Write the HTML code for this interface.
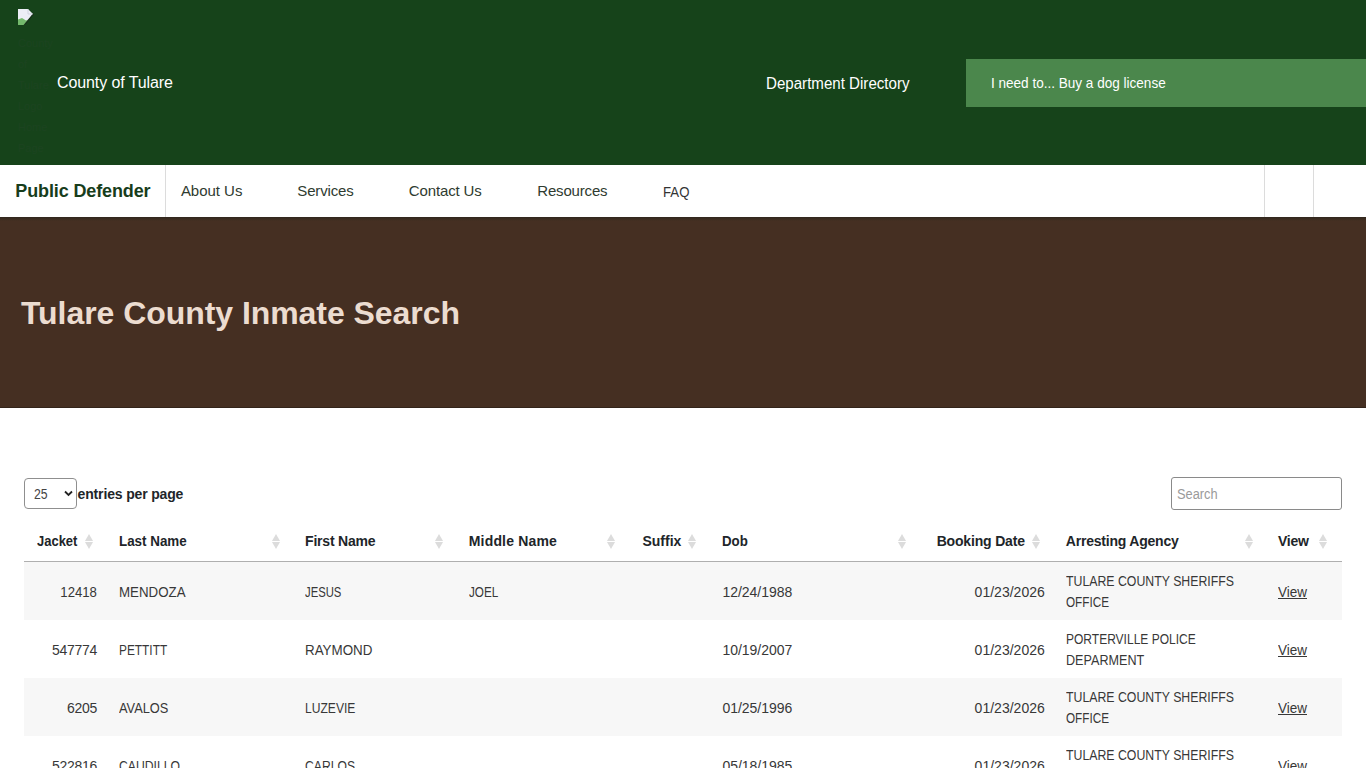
<!DOCTYPE html>
<html><head><meta charset="utf-8"><style>
html,body{margin:0;padding:0;width:1366px;height:768px;overflow:hidden;background:#fff;position:relative;font-family:"Liberation Sans",sans-serif;}
.t{position:absolute;white-space:nowrap;line-height:normal;}
#hdr{position:absolute;left:0;top:0;width:1366px;height:165px;background:#16431a;}
#btn{position:absolute;left:966px;top:59px;width:400px;height:48px;background:#4b874c;}
#nav{position:absolute;left:0;top:165px;width:1366px;height:52px;background:#fff;}
.vd{position:absolute;top:165px;width:1px;height:52px;background:#dcdcdc;}
#navb{position:absolute;left:0;top:217px;width:1366px;height:4px;background:linear-gradient(#30271d,#3b2c20 50%,#452f22);}
#hero{position:absolute;left:0;top:221px;width:1366px;height:187px;background:#452f22;}
#herob{position:absolute;left:0;top:407px;width:1366px;height:1px;background:#33241a;}
#sel{position:absolute;left:24px;top:478px;width:51px;height:29px;border:1px solid #8f8f8f;border-radius:4px;background:#fff;}
#srch{position:absolute;left:1171px;top:477px;width:169px;height:31px;border:1px solid #8a8a8a;border-radius:3px;background:#fff;}
#thl{position:absolute;left:24px;top:561px;width:1318px;height:1px;background:#afafaf;}
.stripe{position:absolute;left:24px;width:1318px;height:58px;background:#f7f7f7;}
.si{position:absolute;top:533px;width:9px;height:16px;}
.si .up{position:absolute;left:0.5px;top:0.5px;width:0;height:0;border-left:4px solid transparent;border-right:4px solid transparent;border-bottom:7px solid #dcdcdc;}
.si .dn{position:absolute;left:0.5px;top:9px;width:0;height:0;border-left:4px solid transparent;border-right:4px solid transparent;border-top:7px solid #dcdcdc;}
#bimg{position:absolute;left:18px;top:9px;width:16px;height:16px;}
</style></head><body>
<div id="hdr"></div>
<svg id="bimg" viewBox="0 0 16 16"><path d="M0 0H10L15 5L6.5 16H0Z" fill="#eceef6"/><path d="M0 10.5L4 9L8 11.5L10.5 10.5L6.5 16H0Z" fill="#74b96c"/><path d="M6 16.5L15.5 4.8" stroke="#17301a" stroke-width="1.3"/><path d="M10 0L10 5H15" fill="none" stroke="#c8ccd8" stroke-width="0.7"/></svg>
<div id="alt" style="position:absolute;left:18px;top:33px;width:30px;font:11px/21px 'Liberation Sans',sans-serif;color:#1c4320;">County of Tulare Logo Home Page</div>
<div id="btn"></div>
<div id="nav"></div>
<div class="vd" style="left:165px"></div>
<div class="vd" style="left:1264px"></div>
<div class="vd" style="left:1313px"></div>
<div id="navb"></div>
<div id="hero"></div>
<div id="herob"></div>
<div id="sel"></div>
<svg style="position:absolute;left:63.5px;top:489.5px" width="9" height="7" viewBox="0 0 9 7"><path d="M1 1.5L4.5 5L8 1.5" fill="none" stroke="#222" stroke-width="1.8"/></svg>
<div id="srch"></div>
<div class="stripe" style="top:562px"></div><div class="stripe" style="top:678px"></div>
<div id="thl"></div>
<div class="si" style="left:84.8px"><span class="up"></span><span class="dn"></span></div>
<div class="si" style="left:271.5px"><span class="up"></span><span class="dn"></span></div>
<div class="si" style="left:434.8px"><span class="up"></span><span class="dn"></span></div>
<div class="si" style="left:606.3px"><span class="up"></span><span class="dn"></span></div>
<div class="si" style="left:687.2px"><span class="up"></span><span class="dn"></span></div>
<div class="si" style="left:897.2px"><span class="up"></span><span class="dn"></span></div>
<div class="si" style="left:1031.6px"><span class="up"></span><span class="dn"></span></div>
<div class="si" style="left:1244.0px"><span class="up"></span><span class="dn"></span></div>
<div class="si" style="left:1318.8px"><span class="up"></span><span class="dn"></span></div>
<div class="t" style="font:16px 'Liberation Sans', sans-serif;color:#ffffff;top:73.52px;letter-spacing:-0.094px;left:57.00px;">County of Tulare</div>
<div class="t" style="font:16px 'Liberation Sans', sans-serif;color:#ffffff;top:75.12px;letter-spacing:0.000px;transform:scaleX(0.9438);transform-origin:left center;left:766.40px;">Department Directory</div>
<div class="t" style="font:14.5px 'Liberation Sans', sans-serif;color:#ffffff;top:75.48px;letter-spacing:0.000px;transform:scaleX(0.9341);transform-origin:left center;left:990.80px;">I need to... Buy a dog license</div>
<div class="t" style="font:bold 18px 'Liberation Sans', sans-serif;color:#173d1b;top:180.71px;letter-spacing:-0.124px;left:15.30px;">Public Defender</div>
<div class="t" style="font:15px 'Liberation Sans', sans-serif;color:#2f3b30;top:182.43px;letter-spacing:-0.029px;left:180.90px;">About Us</div>
<div class="t" style="font:15px 'Liberation Sans', sans-serif;color:#2f3b30;top:182.43px;letter-spacing:-0.162px;left:297.30px;">Services</div>
<div class="t" style="font:15px 'Liberation Sans', sans-serif;color:#2f3b30;top:182.43px;letter-spacing:-0.134px;left:408.80px;">Contact Us</div>
<div class="t" style="font:15px 'Liberation Sans', sans-serif;color:#2f3b30;top:182.43px;letter-spacing:-0.175px;left:537.30px;">Resources</div>
<div class="t" style="font:15px 'Liberation Sans', sans-serif;color:#333333;top:183.43px;letter-spacing:0.000px;transform:scaleX(0.8795);transform-origin:left center;left:663.10px;">FAQ</div>
<div class="t" style="font:bold 32px 'Liberation Sans', sans-serif;color:#ecdcd0;top:294.74px;letter-spacing:-0.054px;left:21.00px;">Tulare County Inmate Search</div>
<div class="t" style="font:14px 'Liberation Sans', sans-serif;color:#444444;top:486.03px;letter-spacing:0.000px;transform:scaleX(0.8730);transform-origin:left center;left:33.70px;">25</div>
<div class="t" style="font:bold 14px 'Liberation Sans', sans-serif;color:#212529;top:486.03px;letter-spacing:-0.157px;left:77.60px;">entries per page</div>
<div class="t" style="font:14px 'Liberation Sans', sans-serif;color:#9a9a9a;top:486.33px;letter-spacing:0.000px;transform:scaleX(0.9153);transform-origin:left center;left:1177.20px;">Search</div>
<div class="t" style="font:bold 14px 'Liberation Sans', sans-serif;color:#212529;top:533.43px;letter-spacing:0.000px;transform:scaleX(0.9267);transform-origin:left center;left:37.10px;">Jacket</div>
<div class="t" style="font:bold 14px 'Liberation Sans', sans-serif;color:#212529;top:533.43px;letter-spacing:0.000px;transform:scaleX(0.9560);transform-origin:left center;left:118.80px;">Last Name</div>
<div class="t" style="font:bold 14px 'Liberation Sans', sans-serif;color:#212529;top:533.43px;letter-spacing:-0.207px;left:305.10px;">First Name</div>
<div class="t" style="font:bold 14px 'Liberation Sans', sans-serif;color:#212529;top:533.43px;letter-spacing:0.164px;left:468.80px;">Middle Name</div>
<div class="t" style="font:bold 14px 'Liberation Sans', sans-serif;color:#212529;top:533.43px;letter-spacing:-0.018px;left:642.50px;">Suffix</div>
<div class="t" style="font:bold 14px 'Liberation Sans', sans-serif;color:#212529;top:533.43px;letter-spacing:0.000px;transform:scaleX(0.9479);transform-origin:left center;left:722.40px;">Dob</div>
<div class="t" style="font:bold 14px 'Liberation Sans', sans-serif;color:#212529;top:533.43px;letter-spacing:-0.176px;left:936.70px;">Booking Date</div>
<div class="t" style="font:bold 14px 'Liberation Sans', sans-serif;color:#212529;top:533.43px;letter-spacing:-0.212px;left:1065.80px;">Arresting Agency</div>
<div class="t" style="font:bold 14px 'Liberation Sans', sans-serif;color:#212529;top:533.43px;letter-spacing:-0.219px;left:1278.00px;">View</div>
<div class="t" style="font:14px 'Liberation Sans', sans-serif;color:#383838;top:584.33px;letter-spacing:0.000px;transform:scaleX(0.9400);transform-origin:right center;right:1268.70px;">12418</div>
<div class="t" style="font:14px 'Liberation Sans', sans-serif;color:#383838;top:584.33px;letter-spacing:0.000px;transform:scaleX(0.9500);transform-origin:left center;left:118.80px;">MENDOZA</div>
<div class="t" style="font:14px 'Liberation Sans', sans-serif;color:#383838;top:584.33px;letter-spacing:0.000px;transform:scaleX(0.8066);transform-origin:left center;left:305.10px;">JESUS</div>
<div class="t" style="font:14px 'Liberation Sans', sans-serif;color:#383838;top:584.33px;letter-spacing:0.000px;transform:scaleX(0.8368);transform-origin:left center;left:468.80px;">JOEL</div>
<div class="t" style="font:14px 'Liberation Sans', sans-serif;color:#383838;top:584.33px;letter-spacing:-0.020px;left:722.40px;">12/24/1988</div>
<div class="t" style="font:14px 'Liberation Sans', sans-serif;color:#383838;top:584.33px;letter-spacing:0.014px;right:321.19px;">01/23/2026</div>
<div class="t" style="font:14px 'Liberation Sans', sans-serif;color:#383838;top:573.33px;letter-spacing:0.000px;transform:scaleX(0.8791);transform-origin:left center;left:1065.80px;">TULARE COUNTY SHERIFFS</div>
<div class="t" style="font:14px 'Liberation Sans', sans-serif;color:#383838;top:594.13px;letter-spacing:0.000px;transform:scaleX(0.8375);transform-origin:left center;left:1065.80px;">OFFICE</div>
<div class="t" style="font:14px 'Liberation Sans', sans-serif;color:#383838;top:584.13px;letter-spacing:0.000px;transform:scaleX(0.9637);transform-origin:left center;left:1277.50px;text-decoration:underline;">View</div>
<div class="t" style="font:14px 'Liberation Sans', sans-serif;color:#383838;top:642.33px;letter-spacing:-0.304px;right:1269.00px;">547774</div>
<div class="t" style="font:14px 'Liberation Sans', sans-serif;color:#383838;top:642.33px;letter-spacing:0.000px;transform:scaleX(0.8489);transform-origin:left center;left:118.80px;">PETTITT</div>
<div class="t" style="font:14px 'Liberation Sans', sans-serif;color:#383838;top:642.33px;letter-spacing:0.000px;transform:scaleX(0.9556);transform-origin:left center;left:305.10px;">RAYMOND</div>
<div class="t" style="font:14px 'Liberation Sans', sans-serif;color:#383838;top:642.33px;letter-spacing:-0.020px;left:722.40px;">10/19/2007</div>
<div class="t" style="font:14px 'Liberation Sans', sans-serif;color:#383838;top:642.33px;letter-spacing:0.014px;right:321.19px;">01/23/2026</div>
<div class="t" style="font:14px 'Liberation Sans', sans-serif;color:#383838;top:631.33px;letter-spacing:0.000px;transform:scaleX(0.8577);transform-origin:left center;left:1065.80px;">PORTERVILLE POLICE</div>
<div class="t" style="font:14px 'Liberation Sans', sans-serif;color:#383838;top:652.13px;letter-spacing:0.000px;transform:scaleX(0.9003);transform-origin:left center;left:1065.80px;">DEPARMENT</div>
<div class="t" style="font:14px 'Liberation Sans', sans-serif;color:#383838;top:642.13px;letter-spacing:0.000px;transform:scaleX(0.9637);transform-origin:left center;left:1277.50px;text-decoration:underline;">View</div>
<div class="t" style="font:14px 'Liberation Sans', sans-serif;color:#383838;top:700.33px;letter-spacing:-0.252px;right:1268.95px;">6205</div>
<div class="t" style="font:14px 'Liberation Sans', sans-serif;color:#383838;top:700.33px;letter-spacing:0.000px;transform:scaleX(0.9138);transform-origin:left center;left:118.80px;">AVALOS</div>
<div class="t" style="font:14px 'Liberation Sans', sans-serif;color:#383838;top:700.33px;letter-spacing:0.000px;transform:scaleX(0.8636);transform-origin:left center;left:305.10px;">LUZEVIE</div>
<div class="t" style="font:14px 'Liberation Sans', sans-serif;color:#383838;top:700.33px;letter-spacing:-0.020px;left:722.40px;">01/25/1996</div>
<div class="t" style="font:14px 'Liberation Sans', sans-serif;color:#383838;top:700.33px;letter-spacing:0.014px;right:321.19px;">01/23/2026</div>
<div class="t" style="font:14px 'Liberation Sans', sans-serif;color:#383838;top:689.33px;letter-spacing:0.000px;transform:scaleX(0.8791);transform-origin:left center;left:1065.80px;">TULARE COUNTY SHERIFFS</div>
<div class="t" style="font:14px 'Liberation Sans', sans-serif;color:#383838;top:710.13px;letter-spacing:0.000px;transform:scaleX(0.8375);transform-origin:left center;left:1065.80px;">OFFICE</div>
<div class="t" style="font:14px 'Liberation Sans', sans-serif;color:#383838;top:700.13px;letter-spacing:0.000px;transform:scaleX(0.9637);transform-origin:left center;left:1277.50px;text-decoration:underline;">View</div>
<div class="t" style="font:14px 'Liberation Sans', sans-serif;color:#383838;top:758.33px;letter-spacing:-0.304px;right:1269.00px;">522816</div>
<div class="t" style="font:14px 'Liberation Sans', sans-serif;color:#383838;top:758.33px;letter-spacing:0.000px;transform:scaleX(0.8710);transform-origin:left center;left:118.80px;">CAUDILLO</div>
<div class="t" style="font:14px 'Liberation Sans', sans-serif;color:#383838;top:758.33px;letter-spacing:0.000px;transform:scaleX(0.8684);transform-origin:left center;left:305.10px;">CARLOS</div>
<div class="t" style="font:14px 'Liberation Sans', sans-serif;color:#383838;top:758.33px;letter-spacing:-0.020px;left:722.40px;">05/18/1985</div>
<div class="t" style="font:14px 'Liberation Sans', sans-serif;color:#383838;top:758.33px;letter-spacing:0.014px;right:321.19px;">01/23/2026</div>
<div class="t" style="font:14px 'Liberation Sans', sans-serif;color:#383838;top:747.33px;letter-spacing:0.000px;transform:scaleX(0.8791);transform-origin:left center;left:1065.80px;">TULARE COUNTY SHERIFFS</div>
<div class="t" style="font:14px 'Liberation Sans', sans-serif;color:#383838;top:768.13px;letter-spacing:0.000px;transform:scaleX(0.8375);transform-origin:left center;left:1065.80px;">OFFICE</div>
<div class="t" style="font:14px 'Liberation Sans', sans-serif;color:#383838;top:758.13px;letter-spacing:0.000px;transform:scaleX(0.9637);transform-origin:left center;left:1277.50px;text-decoration:underline;">View</div>
</body></html>
